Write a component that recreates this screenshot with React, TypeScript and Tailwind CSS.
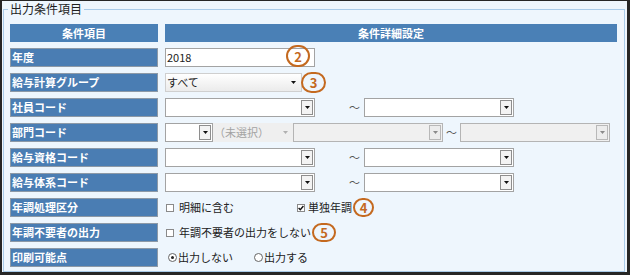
import React from "react";

const FONT = { fontFamily: '"Noto Sans CJK JP", "Noto Sans", sans-serif' };

function Arrow({ c = "#111" }: { c?: string }) {
  return (
    <svg width="5" height="3" viewBox="0 0 5 3">
      <path d="M0 0H5L2.5 3Z" fill={c} />
    </svg>
  );
}

function Select({ className = "", disabled = false }: { className?: string; disabled?: boolean }) {
  return (
    <div
      className={`flex h-[19px] shrink-0 items-stretch border ${
        disabled ? "border-[#b4b4b4] bg-[#f0f0f0]" : "border-[#a3a3a3] bg-white"
      } ${className}`}
    >
      <div className="flex-1" />
      <div
        className={`my-[1px] mr-[1px] flex w-[12px] items-center justify-center border ${
          disabled ? "border-[#b8b8b8] bg-[#ececec]" : "border-[#8e8e8e] bg-[#f3f3f3]"
        }`}
      >
        <Arrow c={disabled ? "#8a8a8a" : "#111"} />
      </div>
    </div>
  );
}

function Tilde({ className = "" }: { className?: string }) {
  return <div className={`flex h-[19px] shrink-0 items-center text-[11px] text-[#555] ${className}`}>～</div>;
}

function Mark({ n, className }: { n: string; className: string }) {
  return (
    <div
      className={`absolute flex items-center justify-center rounded-full border-[2.5px] border-[#c4691f] text-[13px] font-bold leading-none text-[#c4691f] ${className}`}
    >
      {n}
    </div>
  );
}

function Box({ checked = false }: { checked?: boolean }) {
  return (
    <span className="relative inline-flex h-[8px] w-[8px] shrink-0 items-center justify-center border border-[#8a8a8a] bg-white">
      {checked && (
        <svg width="6" height="6" viewBox="0 0 6 6" className="absolute">
          <path d="M0.6 3 L2.3 4.7 L5.4 1" stroke="#111" strokeWidth="1.4" fill="none" />
        </svg>
      )}
    </span>
  );
}

function Radio({ on = false }: { on?: boolean }) {
  return (
    <span className="inline-flex h-[9px] w-[9px] shrink-0 items-center justify-center rounded-full border border-[#666] bg-white">
      {on && <span className="h-[3px] w-[3px] rounded-full bg-[#222]" />}
    </span>
  );
}

function Label({ children }: { children: React.ReactNode }) {
  return (
    <div className="h-[19px] border border-[#8d99a6] bg-[#4a7db3] pl-[1px] text-[11px] font-bold leading-[17px] text-white">
      {children}
    </div>
  );
}

export default function App() {
  return (
    <div
      style={FONT}
      className="flex h-[275px] w-[630px] border-b-[3px] border-l-2 border-r-[3px] border-t border-[#262626] bg-[#eef6fd] text-[#222]"
    >
      <fieldset className="ml-[1px] mr-[2px] h-[271px] w-[622px] border border-[#a9cbe9] px-[6px] pt-[7px]">
        <legend className="ml-[-2px] px-[2px] text-[12px] leading-[16px] text-[#1e1e1e]">出力条件項目</legend>
        <div className="grid grid-cols-[148px_453px] gap-x-[7px] gap-y-[6px]">
          <div className="h-[18px] bg-[#4a80b6] text-center text-[11px] font-bold leading-[18px] text-white">条件項目</div>
          <div className="mr-[1px] h-[18px] bg-[#4a80b6] text-center text-[11px] font-bold leading-[18px] text-white">
            条件詳細設定
          </div>

          <Label>年度</Label>
          <div className="relative flex">
            <div className="h-[19px] w-[150px] border border-[#a3a3a3] bg-white pl-[1px] text-[11px] leading-[17px]">2018</div>
            <Mark n="2" className="left-[121px] top-[-3px] h-[22px] w-[24px]" />
          </div>

          <Label>給与計算グループ</Label>
          <div className="relative flex">
            <div className="flex h-[19px] w-[137px] items-center justify-between border border-[#cfcfcf] bg-gradient-to-b from-white to-[#ebebeb] pl-[1px] pr-[5px] text-[11px]">
              <span>すべて</span>
              <Arrow />
            </div>
            <Mark n="3" className="left-[136px] top-[-1px] h-[21px] w-[25px]" />
          </div>

          <Label>社員コード</Label>
          <div className="flex">
            <Select className="w-[150px]" />
            <Tilde className="w-[49px] justify-end pr-[4px]" />
            <Select className="w-[150px]" />
          </div>

          <Label>部門コード</Label>
          <div className="flex">
            <Select className="w-[48px]" />
            <div className="flex h-[19px] w-[80px] shrink-0 items-center justify-between bg-[#efefef] pl-[1px] pr-[5px] text-[11px] text-[#a3a3a3]">
              <span>（未選択）</span>
              <Arrow c="#b0b0b0" />
            </div>
            <Select disabled className="w-[150px]" />
            <Tilde className="w-[17px] justify-center" />
            <Select disabled className="w-[150px]" />
          </div>

          <Label>給与資格コード</Label>
          <div className="flex">
            <Select className="w-[150px]" />
            <Tilde className="w-[49px] justify-end pr-[4px]" />
            <Select className="w-[150px]" />
          </div>

          <Label>給与体系コード</Label>
          <div className="flex">
            <Select className="w-[150px]" />
            <Tilde className="w-[49px] justify-end pr-[4px]" />
            <Select className="w-[150px]" />
          </div>

          <Label>年調処理区分</Label>
          <div className="relative flex h-[19px] items-center text-[11px]">
            <div className="ml-[1px] flex w-[131px] items-center gap-[5px]">
              <Box />
              <span>明細に含む</span>
            </div>
            <div className="flex items-center gap-[3px]">
              <Box checked />
              <span>単独年調</span>
            </div>
            <Mark n="4" className="left-[188px] top-0 h-[19px] w-[21px]" />
          </div>

          <Label>年調不要者の出力</Label>
          <div className="relative flex h-[19px] items-center text-[11px]">
            <div className="ml-[1px] flex items-center gap-[5px]">
              <Box />
              <span>年調不要者の出力をしない</span>
            </div>
            <Mark n="5" className="left-[147px] top-0 h-[19px] w-[24px]" />
          </div>

          <Label>印刷可能点</Label>
          <div className="flex h-[19px] items-center text-[11px]">
            <div className="ml-[3px] flex w-[86px] items-center gap-[1px]">
              <Radio on />
              <span>出力しない</span>
            </div>
            <div className="flex items-center gap-[1px]">
              <Radio />
              <span>出力する</span>
            </div>
          </div>
        </div>
      </fieldset>
    </div>
  );
}
